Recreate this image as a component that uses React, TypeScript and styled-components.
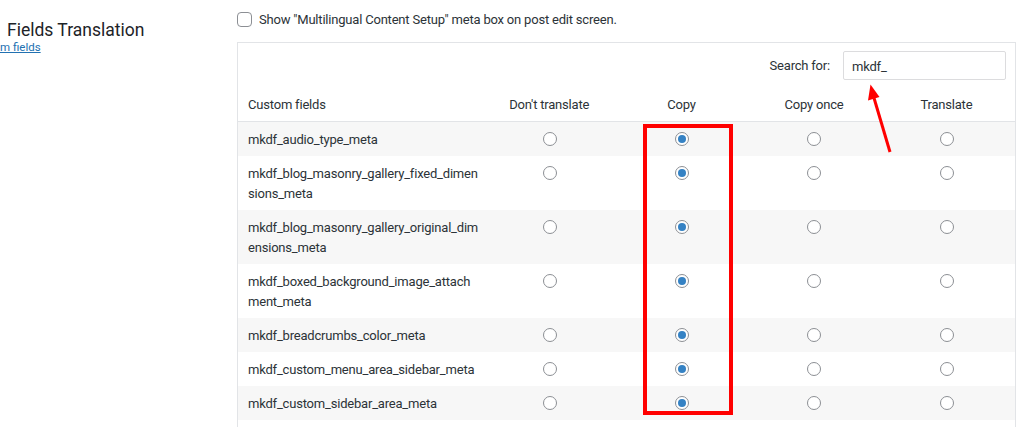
import React from "react";
import styled, { createGlobalStyle } from "styled-components";

const GlobalStyle = createGlobalStyle`
  html, body {
    margin: 0;
    padding: 0;
    background: #fff;
    overflow: hidden;
  }
  body {
    font-family: Roboto, "Noto Sans", sans-serif;
    font-size: 13px;
    letter-spacing: -0.2px;
    color: #2c3338;
  }
`;

const Page = styled.div`
  position: relative;
  display: flex;
  width: 1035px;
  height: 427px;
  overflow: hidden;
`;

const Sidebar = styled.div`
  width: 237px;
  flex-shrink: 0;
  padding: 19px 0 0 7px;
  box-sizing: border-box;
`;

const Heading = styled.h1`
  margin: 0;
  font-size: 17.5px;
  font-weight: 400;
  line-height: 22px;
  letter-spacing: 0;
  color: #1d2327;
`;

const SideLink = styled.a`
  display: block;
  margin: -2px 0 0 -7px;
  font-size: 11.5px;
  line-height: 16px;
  letter-spacing: 0;
  color: #2271b1;
  text-decoration: underline;
  cursor: pointer;
`;

const Main = styled.div`
  flex: 1;
  padding-top: 12px;
`;

const OptionRow = styled.label`
  display: flex;
  align-items: center;
  gap: 7px;
  height: 15px;
  margin-bottom: 15px;
  color: #2c3338;
`;

const Checkbox = styled.input.attrs({ type: "checkbox" })`
  appearance: none;
  margin: 0;
  width: 15px;
  height: 15px;
  box-sizing: border-box;
  border: 1px solid #8c8f94;
  border-radius: 4px;
  background: #fff;
`;

const TableBox = styled.div`
  width: 779px;
  box-sizing: border-box;
  border: 1px solid #e2e4e7;
  background: #fff;
  padding-bottom: 40px;
`;

const SearchBar = styled.div`
  display: flex;
  justify-content: flex-end;
  align-items: center;
  gap: 13px;
  padding: 8px 9px 0 0;
  line-height: 20px;
`;

const SearchLabel = styled.span`
  padding-top: 1px;
`;

const SearchInput = styled.input`
  width: 163px;
  height: 29px;
  box-sizing: border-box;
  border: 1px solid #dcdcde;
  border-radius: 2px;
  padding: 1px 8px 0;
  font: inherit;
  letter-spacing: inherit;
  color: #2c3338;
  outline: none;
`;

const columns = "245px repeat(4, 132.4px)";

const HeadRow = styled.div`
  display: grid;
  grid-template-columns: ${columns};
  border-bottom: 1px solid #e2e4e7;
`;

const HeadCell = styled.div<{ $align: "left" | "center" }>`
  padding: 15px 10px 6px;
  line-height: 20px;
  text-align: ${(p) => p.$align};
  color: #2c3338;
`;

const Row = styled.div<{ $striped: boolean }>`
  display: grid;
  grid-template-columns: ${columns};
  background: ${(p) => (p.$striped ? "#f7f7f7" : "#fff")};
`;

const NameCell = styled.div`
  padding: 8px 10px 6px;
  line-height: 20px;
  white-space: nowrap;
  color: #2c3338;
`;

const ChoiceCell = styled.div`
  display: flex;
  justify-content: center;
  align-items: flex-start;
  padding: 10px 0 0 1px;
`;

const Radio = styled.input.attrs({ type: "radio" })`
  appearance: none;
  position: relative;
  margin: 0;
  width: 14px;
  height: 14px;
  box-sizing: border-box;
  border: 1px solid #8c8f94;
  border-radius: 50%;
  background: #fff;

  &:checked::before {
    content: "";
    position: absolute;
    inset: 2px;
    border-radius: 50%;
    background: #3582c4;
  }
`;

const Highlight = styled.div`
  position: absolute;
  left: 643px;
  top: 124px;
  width: 90px;
  height: 291px;
  box-sizing: border-box;
  border: 4px solid #ff0000;
  pointer-events: none;
`;

const ArrowLayer = styled.svg`
  position: absolute;
  left: 0;
  top: 0;
  pointer-events: none;
`;

const choices = ["Don't translate", "Copy", "Copy once", "Translate"];

const fields = [
  { id: "audio", lines: ["mkdf_audio_type_meta"] },
  { id: "fixed", lines: ["mkdf_blog_masonry_gallery_fixed_dimen", "sions_meta"] },
  { id: "original", lines: ["mkdf_blog_masonry_gallery_original_dim", "ensions_meta"] },
  { id: "boxed", lines: ["mkdf_boxed_background_image_attach", "ment_meta"] },
  { id: "breadcrumbs", lines: ["mkdf_breadcrumbs_color_meta"] },
  { id: "menu", lines: ["mkdf_custom_menu_area_sidebar_meta"] },
  { id: "sidebar", lines: ["mkdf_custom_sidebar_area_meta"] },
];

function App() {
  return (
    <>
      <GlobalStyle />
      <Page>
        <Sidebar>
          <Heading>Fields Translation</Heading>
          <SideLink>m fields</SideLink>
        </Sidebar>
        <Main>
          <OptionRow>
            <Checkbox />
            Show "Multilingual Content Setup" meta box on post edit screen.
          </OptionRow>
          <TableBox>
            <SearchBar>
              <SearchLabel>Search for:</SearchLabel>
              <SearchInput defaultValue="mkdf_" />
            </SearchBar>
            <HeadRow>
              <HeadCell $align="left">Custom fields</HeadCell>
              {choices.map((c) => (
                <HeadCell key={c} $align="center">
                  {c}
                </HeadCell>
              ))}
            </HeadRow>
            {fields.map((f, i) => (
              <Row key={f.id} $striped={i % 2 === 0}>
                <NameCell>
                  {f.lines.map((line, j) => (
                    <div key={j}>{line}</div>
                  ))}
                </NameCell>
                {choices.map((c) => (
                  <ChoiceCell key={c}>
                    <Radio name={f.id} defaultChecked={c === "Copy"} />
                  </ChoiceCell>
                ))}
              </Row>
            ))}
          </TableBox>
        </Main>
        <Highlight />
        <ArrowLayer width="1035" height="427" viewBox="0 0 1035 427">
          <line x1="890" y1="152" x2="874" y2="98" stroke="#ff0000" strokeWidth="3" />
          <polygon points="870.5,84.5 879.5,97 868,100.5" fill="#ff0000" />
        </ArrowLayer>
      </Page>
    </>
  );
}

export default App;
